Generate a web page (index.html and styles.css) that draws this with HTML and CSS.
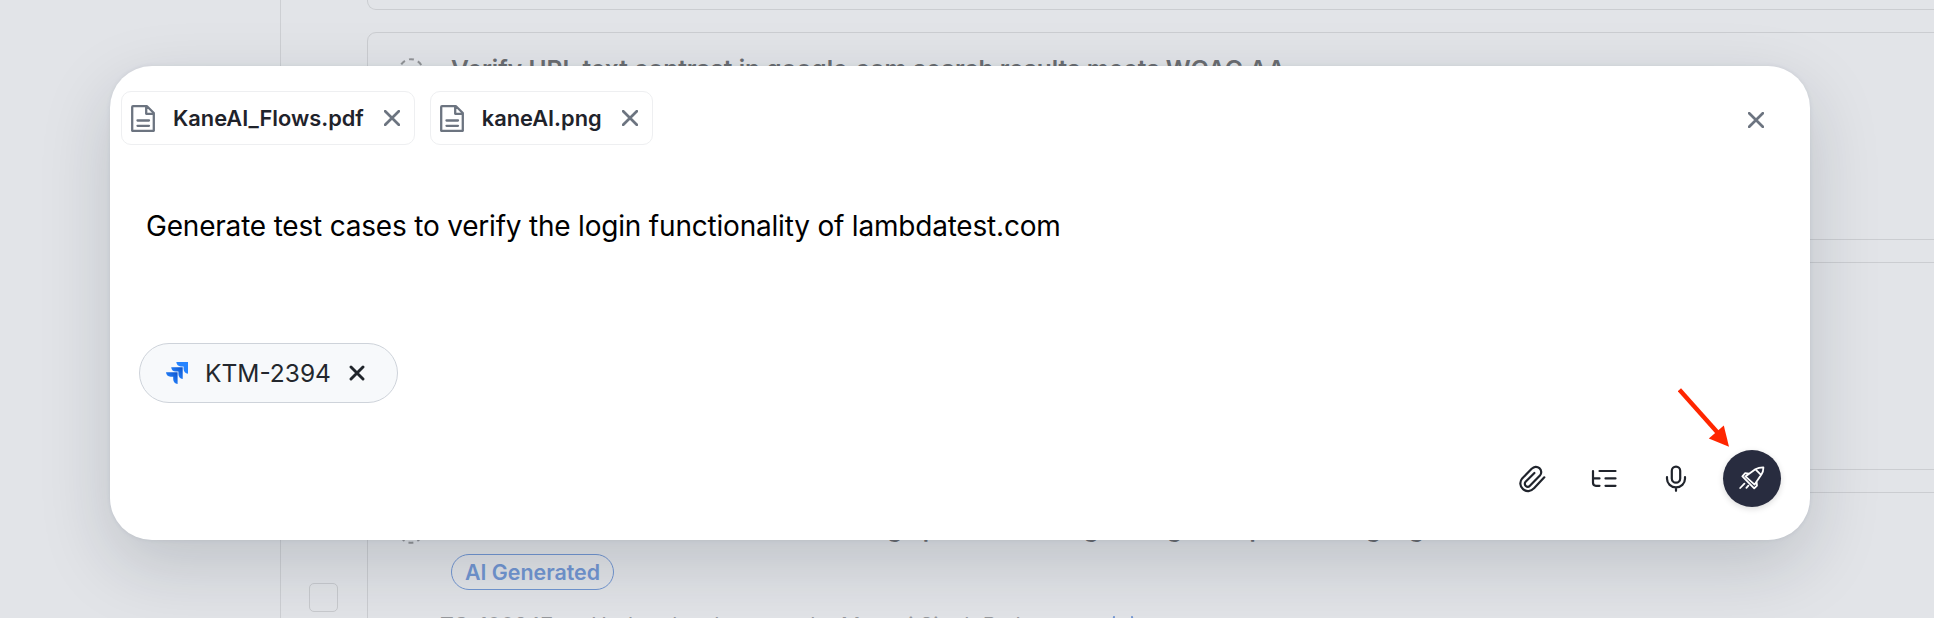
FILE: index.html
```html
<!DOCTYPE html>
<html lang="en">
<head>
<meta charset="utf-8">
<title>KaneAI</title>
<link rel="stylesheet" href="styles.css">
</head>
<body>
<div class="page">
  <aside class="sidebar"></aside>
  <main class="list">
    <section class="card card-first"></section>
    <section class="card">
      <div class="card-head">
        <svg class="status" viewBox="0 0 26 26"><circle cx="13" cy="13" r="11.8"/></svg>
        <h2 class="title">Verify URL text contrast in google.com search results meets WCAG AA</h2>
      </div>
    </section>
    <section class="card"></section>
    <div class="row">
      <span class="checkbox"></span>
      <section class="card">
        <div class="card-head">
          <svg class="status" viewBox="0 0 26 26"><circle cx="13" cy="13" r="11.8"/></svg>
          <h2 class="title title-long">Confirm the search result when looking up a stored image using an imported language</h2>
        </div>
        <span class="tag">AI Generated</span>
        <div class="meta"><span>TC-100247</span><span>Updated an hour ago by Manasi Singh Rathore</span><svg class="meta-icon" viewBox="0 0 24 24"><path d="M3 1L1 12L3 22M21 1L23 12L21 22"/></svg></div>
      </section>
    </div>
  </main>
</div>

<div class="modal">
  <div class="files">
    <div class="file">
      <svg class="doc" viewBox="0 0 24 27"><path d="M2 1.2H16L22.8 8V25.8H1.2V2Q1.2 1.2 2 1.2ZM15.2 1.5V8.8H22.5M6.5 15.5H18M6.5 20.8H18"/></svg>
      <span>KaneAI_Flows.pdf</span>
      <svg class="x" viewBox="0 0 16 16"><path d="M1.2 1.2L14.8 14.8M14.8 1.2L1.2 14.8"/></svg>
    </div>
    <div class="file">
      <svg class="doc" viewBox="0 0 24 27"><path d="M2 1.2H16L22.8 8V25.8H1.2V2Q1.2 1.2 2 1.2ZM15.2 1.5V8.8H22.5M6.5 15.5H18M6.5 20.8H18"/></svg>
      <span>kaneAI.png</span>
      <svg class="x" viewBox="0 0 16 16"><path d="M1.2 1.2L14.8 14.8M14.8 1.2L1.2 14.8"/></svg>
    </div>
    <svg class="x close" viewBox="0 0 16 16"><path d="M1.2 1.2L14.8 14.8M14.8 1.2L1.2 14.8"/></svg>
  </div>
  <p class="prompt">Generate test cases to verify the login functionality of lambdatest.com</p>
  <div class="issue">
    <svg class="jira" viewBox="0 0 22 22">
      <defs><linearGradient id="shade" x1="1" y1="0" x2="0.3" y2="0.7"><stop offset="0" stop-color="#0b50c8"/><stop offset="1" stop-color="#2684ff"/></linearGradient></defs>
      <path fill="#2684ff" d="M10.3 0H22V11.7Q17.8 11.2 17.6 7V4.4H15Q10.8 4.2 10.3 0Z"/>
      <path fill="url(#shade)" d="M5.2 5.2H16.7V16.9Q12.6 16.4 12.4 12.2V9.6H9.8Q5.6 9.4 5.2 5.2Z"/>
      <path fill="url(#shade)" d="M0 10.3H11.6V22Q7.4 21.5 7.2 17.3V14.7H4.6Q.4 14.5 0 10.3Z"/>
    </svg>
    <span>KTM-2394</span>
    <svg class="x x-bold" viewBox="0 0 16 16"><path d="M2 2L14 14M14 2L2 14"/></svg>
  </div>
  <div class="tools">
    <svg class="tool" viewBox="0 0 28 28"><path d="M26.3 12.3L15.8 23.4A7.6 7.6 0 0 1 4.2 13.4L13.9 3.6A5.3 5.3 0 0 1 21.9 10.6L11.9 20.8A2.9 2.9 0 0 1 7.6 16.8L16.4 8"/></svg>
    <svg class="tool" viewBox="0 0 28 28"><path d="M9.5 6H25.5M15.5 13.4H25.5M15.5 20.8H25.5M3 6V17.8Q3 20.8 6 20.8H9.5M3 13.4H9.5"/></svg>
    <svg class="tool" viewBox="0 0 28 28"><rect x="9.8" y="1.6" width="8.4" height="16" rx="4.2"/><path d="M5 12.2V13.8A9 8.6 0 0 0 23 13.8V12.2M14 22.6V25.8"/></svg>
    <button class="send">
      <svg viewBox="0 0 26 26"><path d="M6.4 10.4L16.3 3.2Q20 1.3 24.4 1.4Q24.5 5.2 22.4 8.6L15.6 18.6ZM16.5 3.4L22 8.8M10.2 7.6L6 7.2L3.4 10.4L15.2 22.4L18 19.6L17.6 15.8M5.4 17.6L1.2 22M9.4 19.6L7.4 21.8"/></svg>
    </button>
  </div>
</div>

<svg class="arrow" viewBox="0 0 52 60"><path class="arrow-line" d="M1.4 1.8L40 45"/><path class="arrow-tip" d="M51 58.8L30.8 50.4L45.8 37.6Z"/></svg>
</body>
</html>
```

FILE: styles.css
```css
* { box-sizing: border-box; }

body {
  margin: 0;
  width: 1934px;
  height: 618px;
  overflow: hidden;
  background: #e2e4e8;
  font-family: Inter, "Liberation Sans", sans-serif;
}

svg {
  display: block;
  flex: none;
  fill: none;
  stroke-linecap: round;
  stroke-linejoin: round;
}

.page {
  display: flex;
  height: 618px;
  overflow: hidden;
}

.sidebar {
  flex: none;
  width: 281px;
  border-right: 1px solid #cdcfd3;
}

.list {
  flex: none;
  width: 1800px;
  padding-left: 86px;
  display: flex;
  flex-direction: column;
  gap: 22px;
}

.card {
  flex: none;
  height: 208px;
  padding: 20px 0 0 30px;
  border: 1px solid #cbcdd1;
  border-radius: 9px;
}

.card-first {
  height: 10px;
  padding: 0;
  border-top: 0;
  border-radius: 0 0 9px 9px;
}

.card-head {
  display: flex;
  align-items: center;
  gap: 27px;
  height: 36px;
}

.status {
  width: 26px;
  height: 26px;
  stroke: #929497;
  stroke-width: 2;
  stroke-dasharray: 5 4.3;
  stroke-dashoffset: -16;
  stroke-linecap: butt;
}

.title {
  margin: 0 0 4px;
  font-size: 24.5px;
  font-weight: 600;
  line-height: 36px;
  color: #6b6d71;
  white-space: nowrap;
}

.title-long {
  font-size: 23.75px;
}

.row {
  display: flex;
  align-items: flex-start;
  margin-left: -58px;
}

.row .card {
  flex: 1;
}

.checkbox {
  flex: none;
  width: 29px;
  height: 29px;
  margin: 91px 29px 0 0;
  border: 1px solid #c8cace;
  border-radius: 5px;
}

.tag {
  display: block;
  width: 163px;
  height: 36px;
  margin: 5px 0 0 53px;
  border: 1px solid #7296d2;
  border-radius: 18px;
  font-size: 21.4px;
  font-weight: 600;
  line-height: 34px;
  text-align: center;
  color: #7296d2;
}

.meta {
  display: flex;
  align-items: center;
  gap: 38px;
  margin: 20px 0 0 42px;
  font-size: 21.4px;
  line-height: 28px;
  color: #96989c;
  white-space: nowrap;
}

.meta-icon {
  width: 24px;
  height: 24px;
  margin: 6px 0 0 12px;
  stroke: #7296d2;
  stroke-width: 2;
}

.modal {
  position: absolute;
  left: 110px;
  top: 66px;
  width: 1700px;
  height: 474px;
  padding: 25px 0 0 11px;
  display: flex;
  flex-direction: column;
  align-items: flex-start;
  background: #fff;
  border-radius: 42px;
  box-shadow: 0 25px 70px rgba(20, 30, 40, .17), 0 0 4px rgba(60, 80, 120, .1);
}

.files {
  display: flex;
  width: 100%;
  gap: 15px;
  padding-right: 46px;
}

.file {
  display: flex;
  align-items: center;
  height: 54px;
  padding: 0 14px 0 9px;
  border: 1px solid #eeeff1;
  border-radius: 10px;
  font-size: 21.8px;
  font-weight: 600;
  color: #1f232b;
}

.doc {
  width: 24px;
  height: 27px;
  margin-right: 18px;
  stroke: #6c7480;
  stroke-width: 2.3;
}

.x {
  width: 16px;
  height: 16px;
  margin-left: 20px;
  stroke: #6c7480;
  stroke-width: 2.7;
}

.close {
  margin: 21px 0 0 auto;
}

.prompt {
  margin: 61px 0 0 25px;
  font-size: 28px;
  line-height: 40px;
  letter-spacing: -.2px;
  color: #000;
  white-space: nowrap;
}

.issue {
  display: flex;
  align-items: center;
  width: 259px;
  height: 60px;
  margin: 97px 0 0 18px;
  padding-left: 26px;
  background: #f7f9fb;
  border: 1px solid #ced3da;
  border-radius: 30px;
  font-size: 24.5px;
  color: #23272d;
}

.jira {
  width: 22px;
  height: 22px;
  margin-right: 17px;
}

.x-bold {
  stroke: #20252b;
  stroke-width: 2.9;
  margin-left: 18px;
}

.tools {
  display: flex;
  align-items: center;
  gap: 44px;
  margin: 47px 29px 0 auto;
}

.tool {
  width: 28px;
  height: 28px;
  stroke: #20242c;
  stroke-width: 2.2;
}

.send {
  display: grid;
  place-items: center;
  width: 58px;
  height: 57px;
  margin-left: -11px;
  padding: 0;
  border: 0;
  border-radius: 50%;
  background: #282c3f;
  box-shadow: 0 2px 6px rgba(0, 0, 0, .14);
}

.send svg {
  width: 26px;
  height: 26px;
  stroke: #fff;
  stroke-width: 1.8;
}

.arrow {
  position: absolute;
  left: 1678px;
  top: 388px;
  width: 52px;
  height: 60px;
}

.arrow-line {
  stroke: #ff2600;
  stroke-width: 4.4;
  stroke-linecap: butt;
}

.arrow-tip { fill: #ff2600; }
```
